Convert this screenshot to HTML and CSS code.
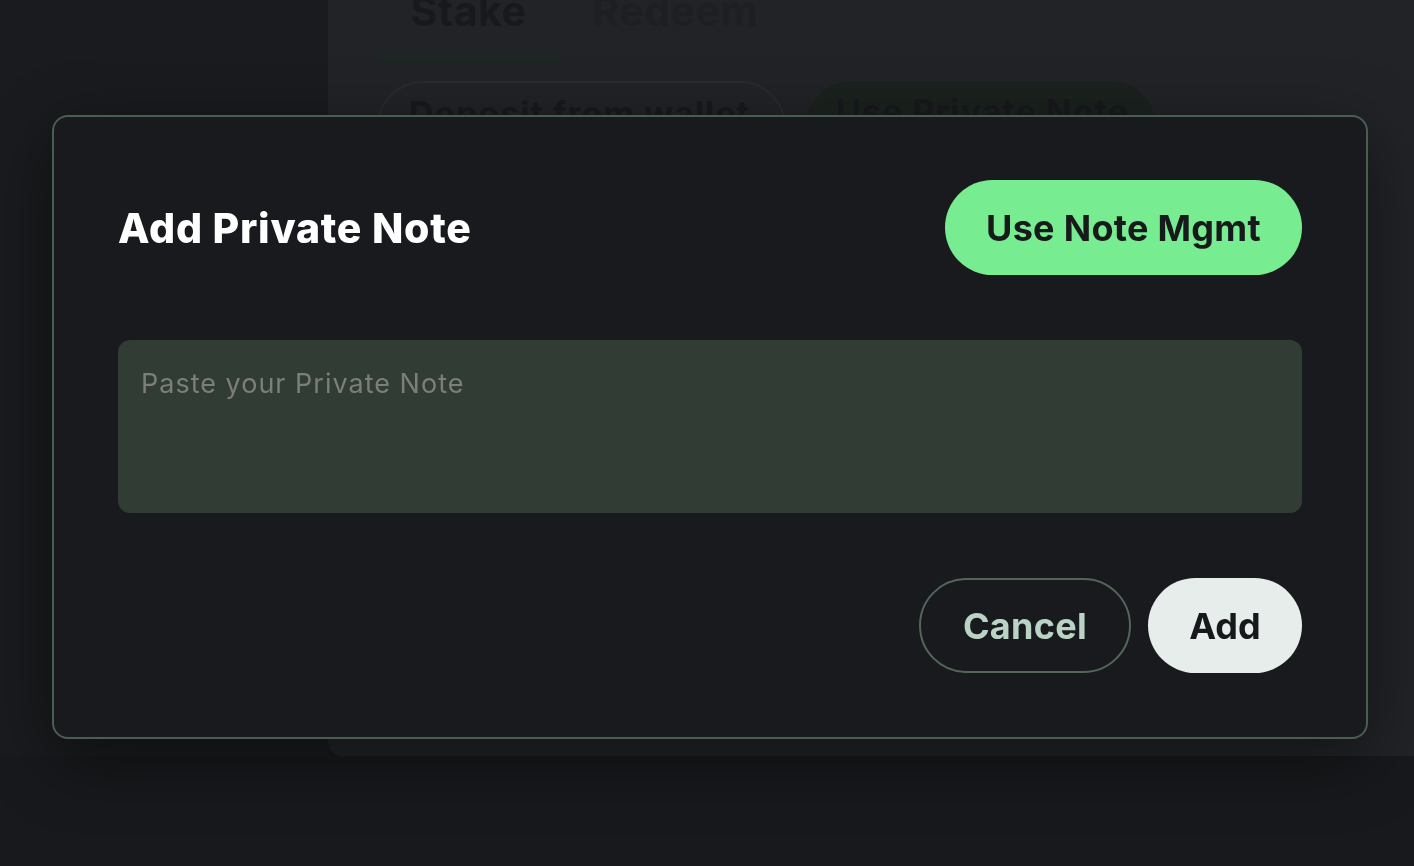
FILE: index.html
```html
<!DOCTYPE html>
<html lang="en">
<head>
<meta charset="utf-8">
<title>Add Private Note</title>
<link rel="stylesheet" href="styles.css">
</head>
<body>
<div class="app">
  <aside class="sidebar"></aside>
  <main class="panel">
    <nav class="tabs">
      <div class="tab tab-active">Stake</div>
      <div class="tab">Redeem</div>
    </nav>
    <div class="modes">
      <div class="mode mode-outline">Deposit from wallet</div>
      <div class="mode mode-filled">Use Private Note</div>
    </div>
  </main>
</div>

<div class="modal" role="dialog" aria-labelledby="modal-title">
  <header class="modal-header">
    <h2 id="modal-title" class="modal-title">Add Private Note</h2>
    <button class="btn btn-green">Use Note Mgmt</button>
  </header>
  <textarea class="note-input" placeholder="Paste your Private Note"></textarea>
  <footer class="modal-footer">
    <button class="btn btn-outline">Cancel</button>
    <button class="btn btn-light">Add</button>
  </footer>
</div>
</body>
</html>
```

FILE: styles.css
```css
* { box-sizing: border-box; }

html, body {
  margin: 0;
  height: 100%;
}

body {
  background: #18191c;
  font-family: "Inter", "Noto Sans", sans-serif;
  overflow: hidden;
}

.app {
  display: flex;
  height: 756px;
}

.sidebar {
  width: 328px;
  flex-shrink: 0;
  background: #1a1b1e;
}

.panel {
  flex: 1;
  background: #222327;
  border-bottom-left-radius: 14px;
  padding-left: 49px;
  overflow: hidden;
}

.tabs {
  display: flex;
  margin-top: -14px;
}

.tab {
  padding: 0 32px 20px;
  font-size: 41px;
  font-weight: 700;
  letter-spacing: 0.6px;
  color: #1e1f22;
  line-height: 50px;
  white-space: nowrap;
  border-bottom: 6px solid transparent;
}

.tab-active {
  color: #18191c;
  border-bottom-color: #1d2822;
  width: 183px;
  text-align: center;
  padding: 0 0 20px;
}

.modes {
  display: flex;
  gap: 20px;
  margin-top: 19px;
}

.mode {
  height: 92px;
  padding: 10px 0 0 30px;
  border-radius: 46px;
  font-size: 34px;
  font-weight: 700;
  letter-spacing: 1px;
  white-space: nowrap;
  color: #18191c;
}

.mode-outline {
  width: 409px;
  border: 2px solid #272c29;
}

.mode-filled {
  width: 350px;
  background: #1b221e;
}

.modal {
  position: fixed;
  left: 52px;
  top: 115px;
  width: 1316px;
  height: 624px;
  background: #191a1d;
  border: 2px solid #4a5d51;
  border-radius: 16px;
  box-shadow: 0 20px 70px rgba(0, 0, 0, 0.45);
  padding: 63px 64px;
  display: flex;
  flex-direction: column;
  gap: 65px;
}

.modal-header {
  display: flex;
  justify-content: space-between;
  align-items: center;
}

.modal-title {
  margin: 0;
  font-size: 41px;
  font-weight: 800;
  color: #ffffff;
  letter-spacing: 0.75px;
}

.btn {
  height: 95px;
  border-radius: 48px;
  font-family: inherit;
  font-size: 36px;
  font-weight: 700;
  border: none;
  cursor: pointer;
}

.btn-green {
  width: 357px;
  background: #77ec90;
  color: #17191b;
  letter-spacing: 0.3px;
}

.note-input {
  display: block;
  width: 100%;
  height: 173px;
  background: #313c34;
  border: none;
  border-radius: 12px;
  padding: 27px 23px;
  font-family: inherit;
  font-size: 27px;
  letter-spacing: 1px;
  color: #e0e0e0;
  resize: none;
  outline: none;
}

.note-input::placeholder {
  color: #7b7e7c;
}

.modal-footer {
  display: flex;
  justify-content: flex-end;
  gap: 17px;
}

.btn-outline {
  width: 212px;
  background: transparent;
  border: 2px solid #52665a;
  color: #b9d3c5;
  letter-spacing: 0.3px;
}

.btn-light {
  width: 154px;
  background: #e7edeb;
  color: #17181b;
}
```
